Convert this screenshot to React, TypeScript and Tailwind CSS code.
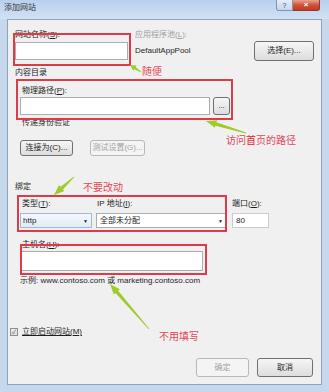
type Pt = [number, number];

// tapered annotation arrow: thin at the tail, triangle head at the tip
function arrowPoints(tail: Pt, head: Pt, w: number) {
  const dx = head[0] - tail[0];
  const dy = head[1] - tail[1];
  const len = Math.hypot(dx, dy);
  const ux = dx / len;
  const uy = dy / len;
  const nx = -uy;
  const ny = ux;
  const hl = Math.min(len * 0.45, w * 2.6);
  const bx = head[0] - ux * hl;
  const by = head[1] - uy * hl;
  const pts: Pt[] = [
    [tail[0] + nx * 0.4, tail[1] + ny * 0.4],
    [bx + nx * w * 0.45, by + ny * w * 0.45],
    [bx + nx * w, by + ny * w],
    head,
    [bx - nx * w, by - ny * w],
    [bx - nx * w * 0.45, by - ny * w * 0.45],
    [tail[0] - nx * 0.4, tail[1] - ny * 0.4],
  ];
  return pts.map((p) => p.join(",")).join(" ");
}

const arrows: { tail: Pt; head: Pt; w: number }[] = [
  { tail: [141, 72], head: [130, 65], w: 3 },
  { tail: [246, 133], head: [206, 121], w: 4 },
  { tail: [74, 177], head: [54, 195], w: 4 },
  { tail: [149, 329], head: [110, 284], w: 4 },
];

function Btn({ label, disabled, className }: { label: string; disabled?: boolean; className: string }) {
  return (
    <div
      className={`flex items-center justify-center rounded-[3px] border ${
        disabled
          ? "border-[#b5b9bd] bg-[#f4f4f4] text-[#a3a3a3]"
          : "border-[#707070] bg-gradient-to-b from-[#f6f6f6] to-[#dddddd] text-[#1e1e1e]"
      } ${className}`}
    >
      {label}
    </div>
  );
}

export default function App() {
  return (
    <div className="relative h-[392px] w-[329px] overflow-hidden bg-[#c6d8ec] font-['Liberation_Sans','Noto_Sans_CJK_SC',sans-serif] text-[8px] leading-[10px] text-[#1e1e1e]">
      {/* title bar */}
      <div className="flex h-[19px] items-start bg-gradient-to-b from-[#b7d0ee] to-[#d2e1f3]">
        <span className="ml-[4px] mt-[3px] text-[8px] text-[#333]">添加网站</span>
        <div className="ml-auto mr-[9px] flex">
          <div className="flex h-[11px] w-[17px] items-center justify-center rounded-bl-[3px] border border-t-0 border-[#7f95b0] bg-gradient-to-b from-[#e4edf7] to-[#c6d6ea] text-[7px] leading-none text-[#33475e]">
            ?
          </div>
          <div className="flex h-[11px] w-[27px] items-center justify-center rounded-br-[3px] border border-l-0 border-t-0 border-[#8a3a2e] bg-gradient-to-b from-[#e9a192] via-[#d0503a] to-[#c23a23] text-[8px] font-bold leading-none text-white">
            ×
          </div>
        </div>
      </div>

      {/* dialog body */}
      <div className="ml-[7px] h-[366px] w-[315px] border border-[#8fa3bb] bg-[#f0f0f0] px-[7px] pt-[10px]">
        {/* site name / app pool */}
        <div className="flex">
          <div className="w-[113px]">
            <div className="h-[11px]">网站名称(<u>S</u>):</div>
            <div className="mt-[1px] h-[18px] border border-[#abadb3] bg-white" />
          </div>
          <div className="ml-[7px] flex-1">
            <div className="h-[11px] text-[#a0a0a0]">应用程序池(<u>L</u>):</div>
            <div className="flex h-[20px] items-center">
              <span>DefaultAppPool</span>
              <Btn label="选择(E)..." className="ml-auto h-[20px] w-[60px]" />
            </div>
          </div>
        </div>

        <div className="mt-[7px] h-[10px]">内容目录</div>

        <div className="pl-[5px]">
          <div className="mt-[8px] h-[10px] pl-[2px]">物理路径(<u>P</u>):</div>
          <div className="mt-[1px] flex h-[18px]">
            <div className="w-[190px] border border-[#abadb3] bg-white" />
            <Btn label="..." className="ml-[3px] w-[17px]" />
          </div>
          <div className="mt-[3px] h-[10px] pl-[2px]">传递身份验证</div>
          <div className="mt-[12px] flex h-[16px]">
            <Btn label="连接为(C)..." className="w-[53px]" />
            <Btn label="测试设置(G)..." disabled className="ml-[17px] w-[55px]" />
          </div>
        </div>

        <div className="mt-[26px] h-[10px]">绑定</div>

        <div className="pl-[5px]">
          <div className="mt-[7px] flex h-[10px]">
            <span className="w-[77px] pl-[2px]">类型(<u>T</u>):</span>
            <span className="w-[135px]">IP 地址(<u>I</u>):</span>
            <span>端口(<u>O</u>):</span>
          </div>
          <div className="mt-[4px] flex h-[15px]">
            <div className="flex w-[72px] items-center border border-[#9fb8d6] bg-gradient-to-b from-[#f4f8fd] to-[#e1ecf8] pl-[2px]">
              <span>http</span>
              <span className="ml-auto mr-[3px] text-[5px]">▼</span>
            </div>
            <div className="ml-[4px] flex w-[131px] items-center border border-[#abadb3] bg-white pl-[3px]">
              <span>全部未分配</span>
              <span className="ml-auto mr-[3px] text-[5px]">▼</span>
            </div>
            <div className="ml-[5px] flex w-[37px] items-center border border-[#c9cdd2] bg-white pl-[3px]">80</div>
          </div>
          <div className="mt-[12px] h-[10px] pl-[2px]">主机名(<u>H</u>):</div>
          <div className="mt-[1px] h-[20px] w-[183px] border border-[#abadb3] bg-white" />
          <div className="mt-[5px] h-[10px] whitespace-nowrap">示例: www.contoso.com 或 marketing.contoso.com</div>
        </div>

        <div className="ml-[-5px] mt-[41px] flex h-[10px] items-center">
          <div className="flex h-[8px] w-[8px] items-center justify-center border border-[#8f8f8f] bg-gradient-to-b from-[#f0f0f0] to-[#dcdcdc] text-[6px] leading-none text-[#444]">
            ✓
          </div>
          <span className="ml-[4px]">
            <u>立即启动网站(M)</u>
          </span>
        </div>

        <div className="mt-[21px] flex h-[19px] justify-end pr-[1px]">
          <Btn label="确定" disabled className="w-[53px]" />
          <Btn label="取消" className="ml-[8px] w-[56px]" />
        </div>
      </div>

      {/* annotations */}
      <div className="absolute left-[13px] top-[33px] h-[33px] w-[118px] border-2 border-[#dc3b47]" />
      <div className="absolute left-[16px] top-[79px] h-[41px] w-[217px] border-2 border-[#dc3b47]" />
      <div className="absolute left-[17px] top-[195px] h-[37px] w-[210px] border-2 border-[#dc3b47]" />
      <div className="absolute left-[20px] top-[244px] h-[31px] w-[187px] border-2 border-[#dc3b47]" />

      <span className="absolute left-[142px] top-[66px] text-[10px] leading-[12px] text-[#e04858]">随便</span>
      <span className="absolute left-[226px] top-[135px] text-[10px] leading-[12px] text-[#e04858]">
        访问<span className="text-[#e8202c]">首</span>页的路径
      </span>
      <span className="absolute left-[83px] top-[182px] text-[10px] leading-[12px] text-[#e04858]">不要改动</span>
      <span className="absolute left-[159px] top-[331px] text-[10px] leading-[12px] text-[#e04858]">不用填写</span>

      <svg className="pointer-events-none absolute left-0 top-0" width="329" height="392" viewBox="0 0 329 392">
        {arrows.map((a, i) => (
          <polygon key={i} points={arrowPoints(a.tail, a.head, a.w)} fill="#9dcc2c" />
        ))}
      </svg>
    </div>
  );
}
